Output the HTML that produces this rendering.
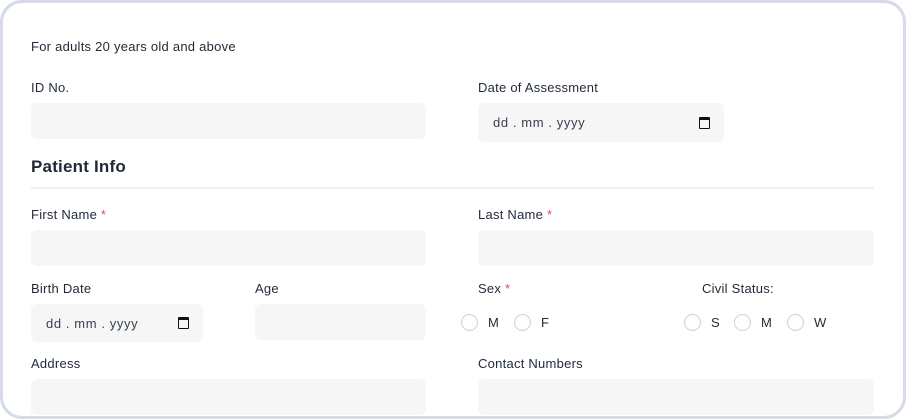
<!DOCTYPE html>
<html><head><style>
*{margin:0;padding:0;box-sizing:border-box}
body{width:906px;height:419px;background:#fff;font-family:"Liberation Sans",sans-serif;color:#1f2937;position:relative;overflow:hidden}
.card{position:absolute;left:0;top:0;width:906px;height:419px;border:3px solid #d5dce8;border-radius:22px;background:#fff}
.t{position:absolute;font-size:13px;white-space:nowrap;letter-spacing:.25px;margin-top:1px}
.r{color:#ef4444}
.in{position:absolute;background:#f6f6f6;border-radius:6px}
.d{font-size:13px;color:#374151;letter-spacing:.6px;padding-left:15px;display:flex;align-items:center;white-space:pre}
.cal{position:absolute;right:14px;top:50%;margin-top:-6px;width:11px;height:12px;border:1.5px solid #111;border-top-width:3px;border-radius:1px}
.rad{position:absolute;width:17px;height:17px;border:1px solid #cbd2dc;border-radius:50%;background:#fff}
h2{position:absolute;left:31px;top:157px;font-size:17px;font-weight:bold;color:#1f2937;letter-spacing:.2px}
.hr{position:absolute;left:31px;top:187px;width:843px;height:2px;background:#eef0f3}
</style></head><body>
<div class="card"></div>
<div class="t" style="left:31px;top:38px">For adults 20 years old and above</div>
<div class="t" style="left:31px;top:79px">ID No.</div>
<div class="t" style="left:478px;top:79px">Date of Assessment</div>
<div class="in" style="left:31px;top:103px;width:395px;height:36px"></div>
<div class="in d" style="left:478px;top:103px;width:246px;height:39px">dd . mm . yyyy<span class="cal"></span></div>
<h2>Patient Info</h2>
<div class="hr"></div>
<div class="t" style="left:31px;top:206px">First Name <span class="r">*</span></div>
<div class="t" style="left:478px;top:206px">Last Name <span class="r">*</span></div>
<div class="in" style="left:31px;top:230px;width:395px;height:36px"></div>
<div class="in" style="left:478px;top:230px;width:396px;height:36px"></div>
<div class="t" style="left:31px;top:280px">Birth Date</div>
<div class="t" style="left:255px;top:280px">Age</div>
<div class="t" style="left:478px;top:280px">Sex <span class="r">*</span></div>
<div class="t" style="left:702px;top:280px">Civil Status:</div>
<div class="in d" style="left:31px;top:304px;width:172px;height:38px">dd . mm . yyyy<span class="cal"></span></div>
<div class="in" style="left:255px;top:304px;width:171px;height:36px"></div>
<div class="rad" style="left:461px;top:314px"></div><div class="t" style="left:488px;top:314px">M</div>
<div class="rad" style="left:514px;top:314px"></div><div class="t" style="left:541px;top:314px">F</div>
<div class="rad" style="left:684px;top:314px"></div><div class="t" style="left:711px;top:314px">S</div>
<div class="rad" style="left:734px;top:314px"></div><div class="t" style="left:761px;top:314px">M</div>
<div class="rad" style="left:787px;top:314px"></div><div class="t" style="left:814px;top:314px">W</div>
<div class="t" style="left:31px;top:355px">Address</div>
<div class="t" style="left:478px;top:355px">Contact Numbers</div>
<div class="in" style="left:31px;top:379px;width:395px;height:36px"></div>
<div class="in" style="left:478px;top:379px;width:396px;height:36px"></div>
<div style="position:absolute;left:0;top:0;width:906px;height:419px;border:3px solid #d5dce8;border-radius:22px;pointer-events:none"></div>
</body></html>
